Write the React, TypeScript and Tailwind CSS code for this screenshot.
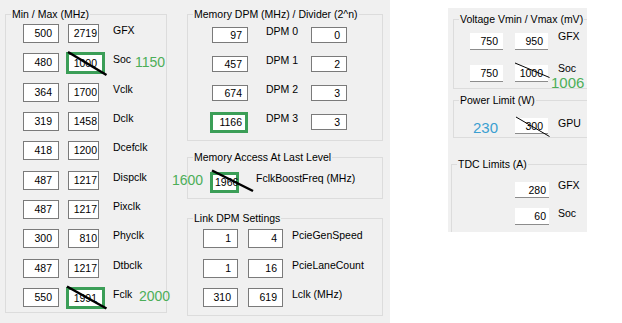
import React from 'react'

const minMax = [
  { min: '500', max: '2719', name: 'GFX' },
  { min: '480', max: '1000', name: 'Soc', hl: true, note: '1150', noteX: 'left-[112px] top-[1px]' },
  { min: '364', max: '1700', name: 'Vclk' },
  { min: '319', max: '1458', name: 'Dclk' },
  { min: '418', max: '1200', name: 'Dcefclk' },
  { min: '487', max: '1217', name: 'Dispclk' },
  { min: '487', max: '1217', name: 'Pixclk' },
  { min: '300', max: '810', name: 'Phyclk' },
  { min: '487', max: '1217', name: 'Dtbclk' },
  { min: '550', max: '1991', name: 'Fclk', hl: true, note: '2000', noteX: 'left-[116px] top-0' },
]

const memDpm = [
  { freq: '97', name: 'DPM 0', div: '0' },
  { freq: '457', name: 'DPM 1', div: '2' },
  { freq: '674', name: 'DPM 2', div: '3' },
  { freq: '1166', name: 'DPM 3', div: '3', hl: true },
]

const linkDpm = [
  { a: '1', b: '4', name: 'PcieGenSpeed' },
  { a: '1', b: '16', name: 'PcieLaneCount' },
  { a: '310', b: '619', name: 'Lclk (MHz)' },
]

// group box caption sitting on the top border
const Caption = ({ text }: { text: string }) => (
  <span className="absolute -top-[7px] left-[5px] px-[1px] bg-[#f0f0f0] leading-[12px] whitespace-nowrap">{text}</span>
)

const App = () => {
  return (
    <div className="relative w-[622px] h-[323px] bg-white flex items-start font-['Liberation_Sans',Arial,sans-serif] text-[10.5px] text-black">
      {/* main tab */}
      <div className="w-[390px] h-[323px] bg-[#f0f0f0] flex items-start pt-[14px] pl-[5px]">
        {/* Min / Max */}
        <div className="relative w-[162px] h-[299px] border border-[#dcdcdc] pt-[9px] pl-[17px]">
          <Caption text="Min / Max (MHz)" />
          <div className="flex flex-col gap-[10.33px]">
            {minMax.map((r) => (
              <div key={r.name} className="relative flex items-start h-[19px]">
                <div className="w-[36px] h-[19px] border border-[#7a7a7a] bg-white text-right pr-[6px] leading-[17px]">{r.min}</div>
                <div className="relative ml-[9px] w-[31px] h-[19px]">
                  {r.hl ? (
                    <div className="absolute -left-[2px] -top-[1px] w-[39px] h-[22px] border-[3px] border-[#3b9e57] bg-white text-right pr-[5px] leading-[16px]">{r.max}</div>
                  ) : (
                    <div className="w-full h-full border border-[#7a7a7a] bg-white text-right pr-[1px] leading-[17px]">{r.max}</div>
                  )}
                </div>
                <span className="ml-[14px] leading-[12px]">{r.name}</span>
                {r.note && (
                  <span className={`absolute ${r.noteX} text-[14px] leading-[16px] text-[#4cae58]`}>{r.note}</span>
                )}
              </div>
            ))}
          </div>
        </div>

        <div className="ml-[20px] w-[196px] flex flex-col">
          {/* Memory DPM */}
          <div className="relative w-[196px] h-[127px] border border-[#dcdcdc] pt-[12px] pl-[24px]">
            <Caption text="Memory DPM (MHz) / Divider (2^n)" />
            <div className="flex flex-col gap-[13px]">
              {memDpm.map((r) => (
                <div key={r.name} className="flex items-start h-[16px]">
                  <div className="relative w-[36px] h-[16px]">
                    {r.hl ? (
                      <div className="absolute -left-[2px] -top-[2px] w-[38px] h-[21px] border-[3px] border-[#3b9e57] bg-white text-right pr-[3px] leading-[15px]">{r.freq}</div>
                    ) : (
                      <div className="w-full h-full border border-[#7a7a7a] bg-white text-right pr-[5px] leading-[14px]">{r.freq}</div>
                    )}
                  </div>
                  <span className="ml-[18px] w-[45px] leading-[12px] -mt-[2px]">{r.name}</span>
                  <div className="w-[36px] h-[16px] border border-[#7a7a7a] bg-white text-right pr-[6px] leading-[14px]">{r.div}</div>
                </div>
              ))}
            </div>
          </div>

          {/* Memory access */}
          <div className="relative mt-[16px] w-[196px] h-[42px] border border-[#dcdcdc] pt-[14px] pl-[22px]">
            <Caption text="Memory Access At Last Level" />
            <div className="flex items-start">
              <div className="w-[29px] h-[21px] border-[3px] border-[#3b9e57] bg-white pl-[2px] leading-[15px] whitespace-nowrap">1966</div>
              <span className="ml-[17px] leading-[12px]">FclkBoostFreq (MHz)</span>
            </div>
            <span className="absolute -left-[16px] top-[14px] text-[14px] leading-[16px] text-[#4cae58]">1600</span>
          </div>

          {/* Link DPM */}
          <div className="relative mt-[19px] w-[196px] h-[98px] border border-[#dcdcdc] pt-[10px] pl-[15px]">
            <Caption text="Link DPM Settings" />
            <div className="flex flex-col gap-[10.5px]">
              {linkDpm.map((r) => (
                <div key={r.name} className="flex items-start h-[19px]">
                  <div className="w-[35px] h-[19px] border border-[#7a7a7a] bg-white text-right pr-[6px] leading-[17px]">{r.a}</div>
                  <div className="ml-[10px] w-[35px] h-[19px] border border-[#7a7a7a] bg-white text-right pr-[5px] leading-[17px]">{r.b}</div>
                  <span className="ml-[9px] leading-[12px]">{r.name}</span>
                </div>
              ))}
            </div>
          </div>
        </div>
      </div>

      {/* side panel */}
      <div className="ml-[58px] mt-[8px] w-[139px] h-[224px] bg-[#f0f0f0] overflow-hidden flex flex-col">
        <div className="relative ml-[5px] mt-[11px] w-[170px] h-[70px] shrink-0 border border-[#dcdcdc] pt-[13px] pl-[16px]">
          <Caption text="Voltage Vmin / Vmax (mV)" />
          <div className="flex flex-col gap-[15px]">
            <div className="flex items-start h-[17px]">
              <div className="w-[33px] h-[17px] bg-white border-b border-[#8c8c8c] text-right pr-[5px] leading-[17px]">750</div>
              <div className="ml-[12px] w-[33px] h-[17px] bg-white border-b border-[#8c8c8c] text-right pr-[5px] leading-[17px]">950</div>
              <span className="ml-[10px] leading-[12px] -mt-[3px]">GFX</span>
            </div>
            <div className="flex items-start h-[17px]">
              <div className="w-[33px] h-[17px] bg-white border-b border-[#8c8c8c] text-right pr-[5px] leading-[17px]">750</div>
              <div className="ml-[12px] w-[33px] h-[17px] bg-white border-b border-[#8c8c8c] text-right pr-[5px] leading-[17px]">1000</div>
              <span className="ml-[10px] leading-[12px] -mt-[3px]">Soc</span>
            </div>
          </div>
          <span className="absolute left-[97px] top-[54px] text-[15px] leading-[17px] text-[#4cae58]">1006</span>
        </div>

        <div className="relative ml-[5px] mt-[11px] w-[170px] h-[38px] shrink-0 border border-[#dcdcdc] pt-[17px] pl-[61px]">
          <Caption text="Power Limit (W)" />
          <div className="flex items-start h-[16px]">
            <div className="w-[33px] h-[16px] bg-white border-b border-[#8c8c8c] text-right pr-[5px] leading-[16px]">300</div>
            <span className="ml-[10px] leading-[12px] -mt-[1px]">GPU</span>
          </div>
          <span className="absolute left-[19px] top-[18px] text-[15px] leading-[17px] text-[#3b9fd1]">230</span>
        </div>

        <div className="relative ml-[3px] mt-[26px] w-[170px] h-[90px] shrink-0 border border-[#dcdcdc] pt-[17px] pl-[63px]">
          <Caption text="TDC Limits (A)" />
          <div className="flex flex-col gap-[10px]">
            <div className="flex items-start h-[16px]">
              <div className="w-[34px] h-[16px] bg-white border-b border-[#8c8c8c] text-right pr-[3px] leading-[16px]">280</div>
              <span className="ml-[9px] leading-[12px] -mt-[3px]">GFX</span>
            </div>
            <div className="flex items-start h-[17px]">
              <div className="w-[34px] h-[17px] bg-white border-b border-[#8c8c8c] text-right pr-[3px] leading-[17px]">60</div>
              <span className="ml-[9px] leading-[12px] -mt-[1px]">Soc</span>
            </div>
          </div>
        </div>
      </div>

      {/* strike-through marks drawn over the old values */}
      <svg className="absolute inset-0 pointer-events-none" width="622" height="323" viewBox="0 0 622 323">
        <line x1="68" y1="52" x2="106.5" y2="75" stroke="#000" strokeWidth="2.5" />
        <line x1="67" y1="286.5" x2="106.5" y2="308.5" stroke="#000" strokeWidth="2.5" />
        <line x1="212" y1="170.5" x2="253" y2="191" stroke="#000" strokeWidth="2.5" />
        <line x1="515" y1="63" x2="549.5" y2="77.5" stroke="#000" strokeWidth="1" />
        <line x1="516" y1="117" x2="549.5" y2="136.5" stroke="#000" strokeWidth="1" />
      </svg>
    </div>
  )
}

export default App
